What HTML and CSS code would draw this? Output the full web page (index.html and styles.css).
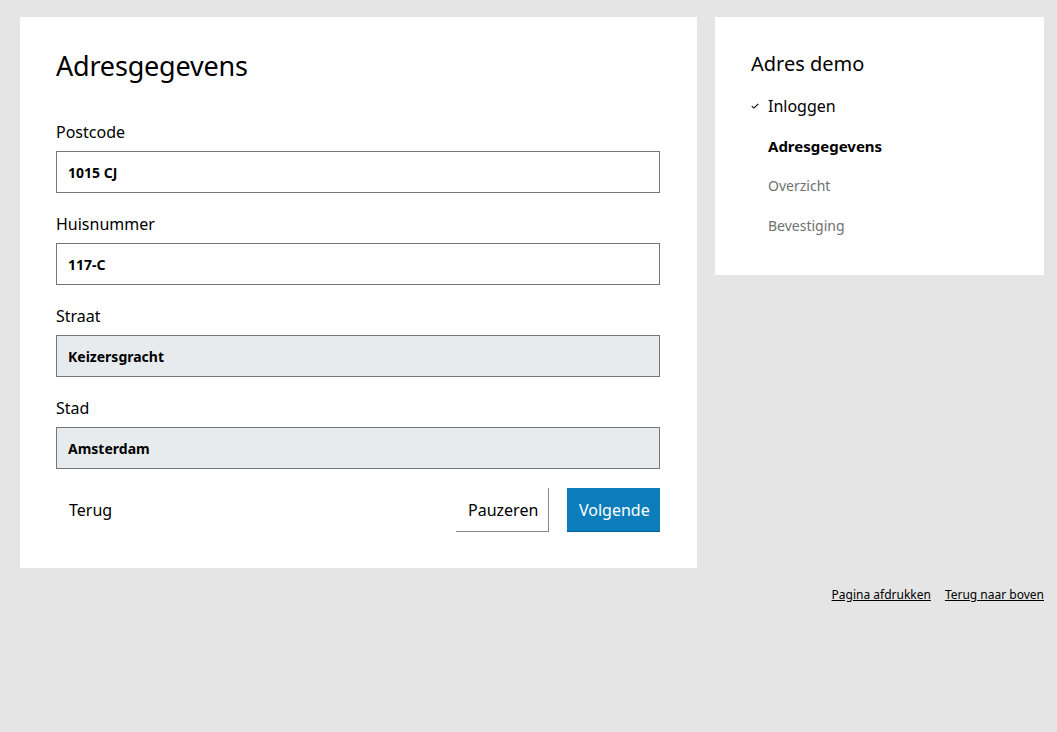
FILE: index.html
```html
<!DOCTYPE html>
<html lang="nl">
<head>
<meta charset="utf-8">
<title>Adresgegevens</title>
<link rel="stylesheet" href="styles.css">
</head>
<body>
<div class="page">
  <div class="columns">
    <main class="card main-card">
      <h1 class="title">Adresgegevens</h1>
      <form class="form">
        <div class="field">
          <label class="label">Postcode</label>
          <input class="input" type="text" value="1015 CJ">
        </div>
        <div class="field">
          <label class="label">Huisnummer</label>
          <input class="input" type="text" value="117-C">
        </div>
        <div class="field">
          <label class="label">Straat</label>
          <input class="input input-readonly" type="text" value="Keizersgracht" readonly>
        </div>
        <div class="field">
          <label class="label">Stad</label>
          <input class="input input-readonly" type="text" value="Amsterdam" readonly>
        </div>
        <div class="actions">
          <button type="button" class="btn btn-link">Terug</button>
          <div class="actions-right">
            <button type="button" class="btn btn-secondary">Pauzeren</button>
            <button type="button" class="btn btn-primary">Volgende</button>
          </div>
        </div>
      </form>
    </main>
    <aside class="card side-card">
      <h2 class="side-title">Adres demo</h2>
      <ol class="steps">
        <li class="step step-done"><span class="check"><svg width="8" height="6" viewBox="0 0 8 6"><path d="M0.8 3.2 L2.9 5.1 L7.2 0.9" fill="none" stroke="#000" stroke-width="1.1"/></svg></span>Inloggen</li>
        <li class="step step-current">Adresgegevens</li>
        <li class="step step-todo">Overzicht</li>
        <li class="step step-todo">Bevestiging</li>
      </ol>
    </aside>
  </div>
  <footer class="footer">
    <a href="#" class="footer-link">Pagina afdrukken</a>
    <a href="#" class="footer-link">Terug naar boven</a>
  </footer>
</div>
</body>
</html>
```

FILE: styles.css
```css
* { box-sizing: border-box; }
html, body { margin: 0; padding: 0; }
body {
  background: #e5e5e5;
  font-family: "Noto Sans", "Open Sans", sans-serif;
  color: #000;
  width: 1057px;
  height: 732px;
  overflow: hidden;
}
.page { padding: 17px 13px 0 20px; }
.columns { display: flex; gap: 18px; align-items: flex-start; }
.card { background: #fff; }
.main-card { width: 677px; padding: 33px 37px 36px 36px; }
.title {
  margin: 0 0 39px;
  font-size: 27px;
  font-weight: 400;
  line-height: 32px;
  letter-spacing: -0.2px;
}
.form { display: flex; flex-direction: column; }
.field { display: flex; flex-direction: column; margin-bottom: 20px; }
.label { font-size: 16px; line-height: 22px; margin-bottom: 8px; }
.input {
  height: 42px;
  border: 1px solid #777;
  padding: 0 11px;
  font-family: inherit;
  font-size: 14px;
  font-weight: 700;
  color: #000;
  background: #fff;
  outline: none;
}
.input-readonly { background: #e8ebee; }
.actions { display: flex; justify-content: space-between; align-items: center; margin-top: -1px; }
.actions-right { display: flex; gap: 18px; }
.btn {
  font-family: inherit;
  font-size: 16px;
  height: 44px;
  padding: 0 12px;
  border: none;
  background: none;
  cursor: pointer;
  color: #000;
}
.btn-link { padding-left: 13px; }
.btn-secondary {
  width: 93px;
  background: #fff;
  border-right: 1px solid #888;
  border-bottom: 1px solid #888;
}
.btn-primary {
  width: 93px;
  background: #0c7dbb;
  color: #fff;
  border-bottom: 1px solid #0a5f90;
}
.side-card { width: 329px; padding: 34px 36px 29px 36px; }
.side-title { margin: 0 0 9px; font-size: 20px; font-weight: 400; line-height: 26px; }
.steps { list-style: none; margin: 0; padding: 0; }
.step {
  position: relative;
  padding-left: 17px;
  font-size: 16px;
  line-height: 20px;
  padding-top: 10px;
  padding-bottom: 10px;
}
.step-done { font-size: 16px; }
.step-current { font-weight: 700; font-size: 15px; }
.step-todo { color: #707070; font-size: 14px; }
.check { position: absolute; left: 0; top: 17px; display: flex; }
.footer { display: flex; justify-content: flex-end; gap: 14px; padding-top: 18px; }
.footer-link { color: #000; font-size: 12px; text-decoration: underline; }
```
